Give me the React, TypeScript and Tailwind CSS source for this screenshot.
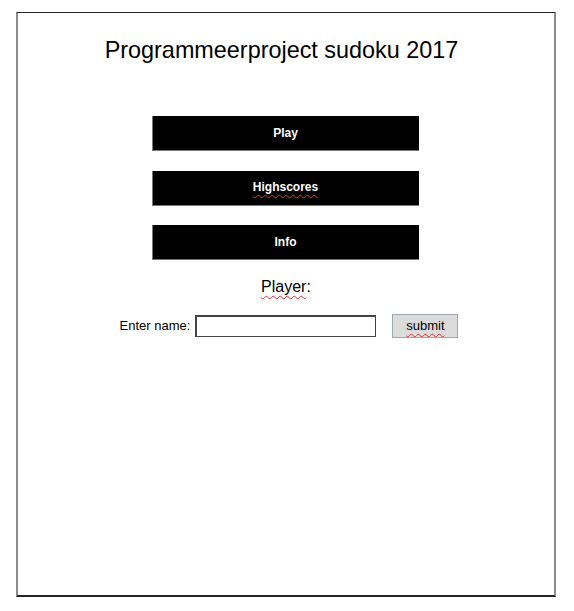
import { useState } from 'react';

const menu = ['Play', 'Highscores', 'Info'];
const misspelled = new Set(['Highscores']);

const squiggle =
  'underline decoration-wavy decoration-[#e03030] decoration-1 underline-offset-[3px]';

export default function App() {
  const [name, setName] = useState('');

  return (
    <div className="pt-[12px] pl-[16px] bg-white min-h-[611px] font-['Liberation_Sans',Arial,sans-serif] text-black">
      <div className="w-[540px] h-[585px] border-x-2 border-x-[#8c8c8c] border-t border-t-[#222] border-b-2 border-b-[#222] flex flex-col items-center">
        <h1 className="mt-[23px] pr-[9px] text-[23.4px] leading-[28px] font-normal">
          Programmeerproject sudoku 2017
        </h1>

        <div className="mt-[52px] pr-[2px] flex flex-col gap-[19.5px]">
          {menu.map((item) => (
            <button
              key={item}
              className="w-[267px] h-[35px] bg-black text-white text-[12px] font-bold border-l border-b border-l-[#777] border-b-[#777] flex items-center justify-center pb-[1px]"
            >
              <span className={misspelled.has(item) ? squiggle : ''}>{item}</span>
            </button>
          ))}
        </div>

        <p className="mt-[18px] text-[16px] leading-[18px]">
          <span className={squiggle}>Player</span>:
        </p>

        <div className="mt-[18px] flex items-center pl-[6px]">
          <label className="text-[13px] mr-[5px]">Enter name:</label>
          <input
            value={name}
            onChange={(e) => setName(e.target.value)}
            className="w-[181px] h-[22px] border border-[#444] border-l-2 border-t-2 bg-white px-1 text-[13px] outline-none"
          />
          <button className="ml-[16px] w-[66px] h-[24px] bg-[#dcdcdc] border border-[#a0a6ad] text-[13px] leading-none pb-[2px]">
            <span className={squiggle}>submit</span>
          </button>
        </div>
      </div>
    </div>
  );
}
